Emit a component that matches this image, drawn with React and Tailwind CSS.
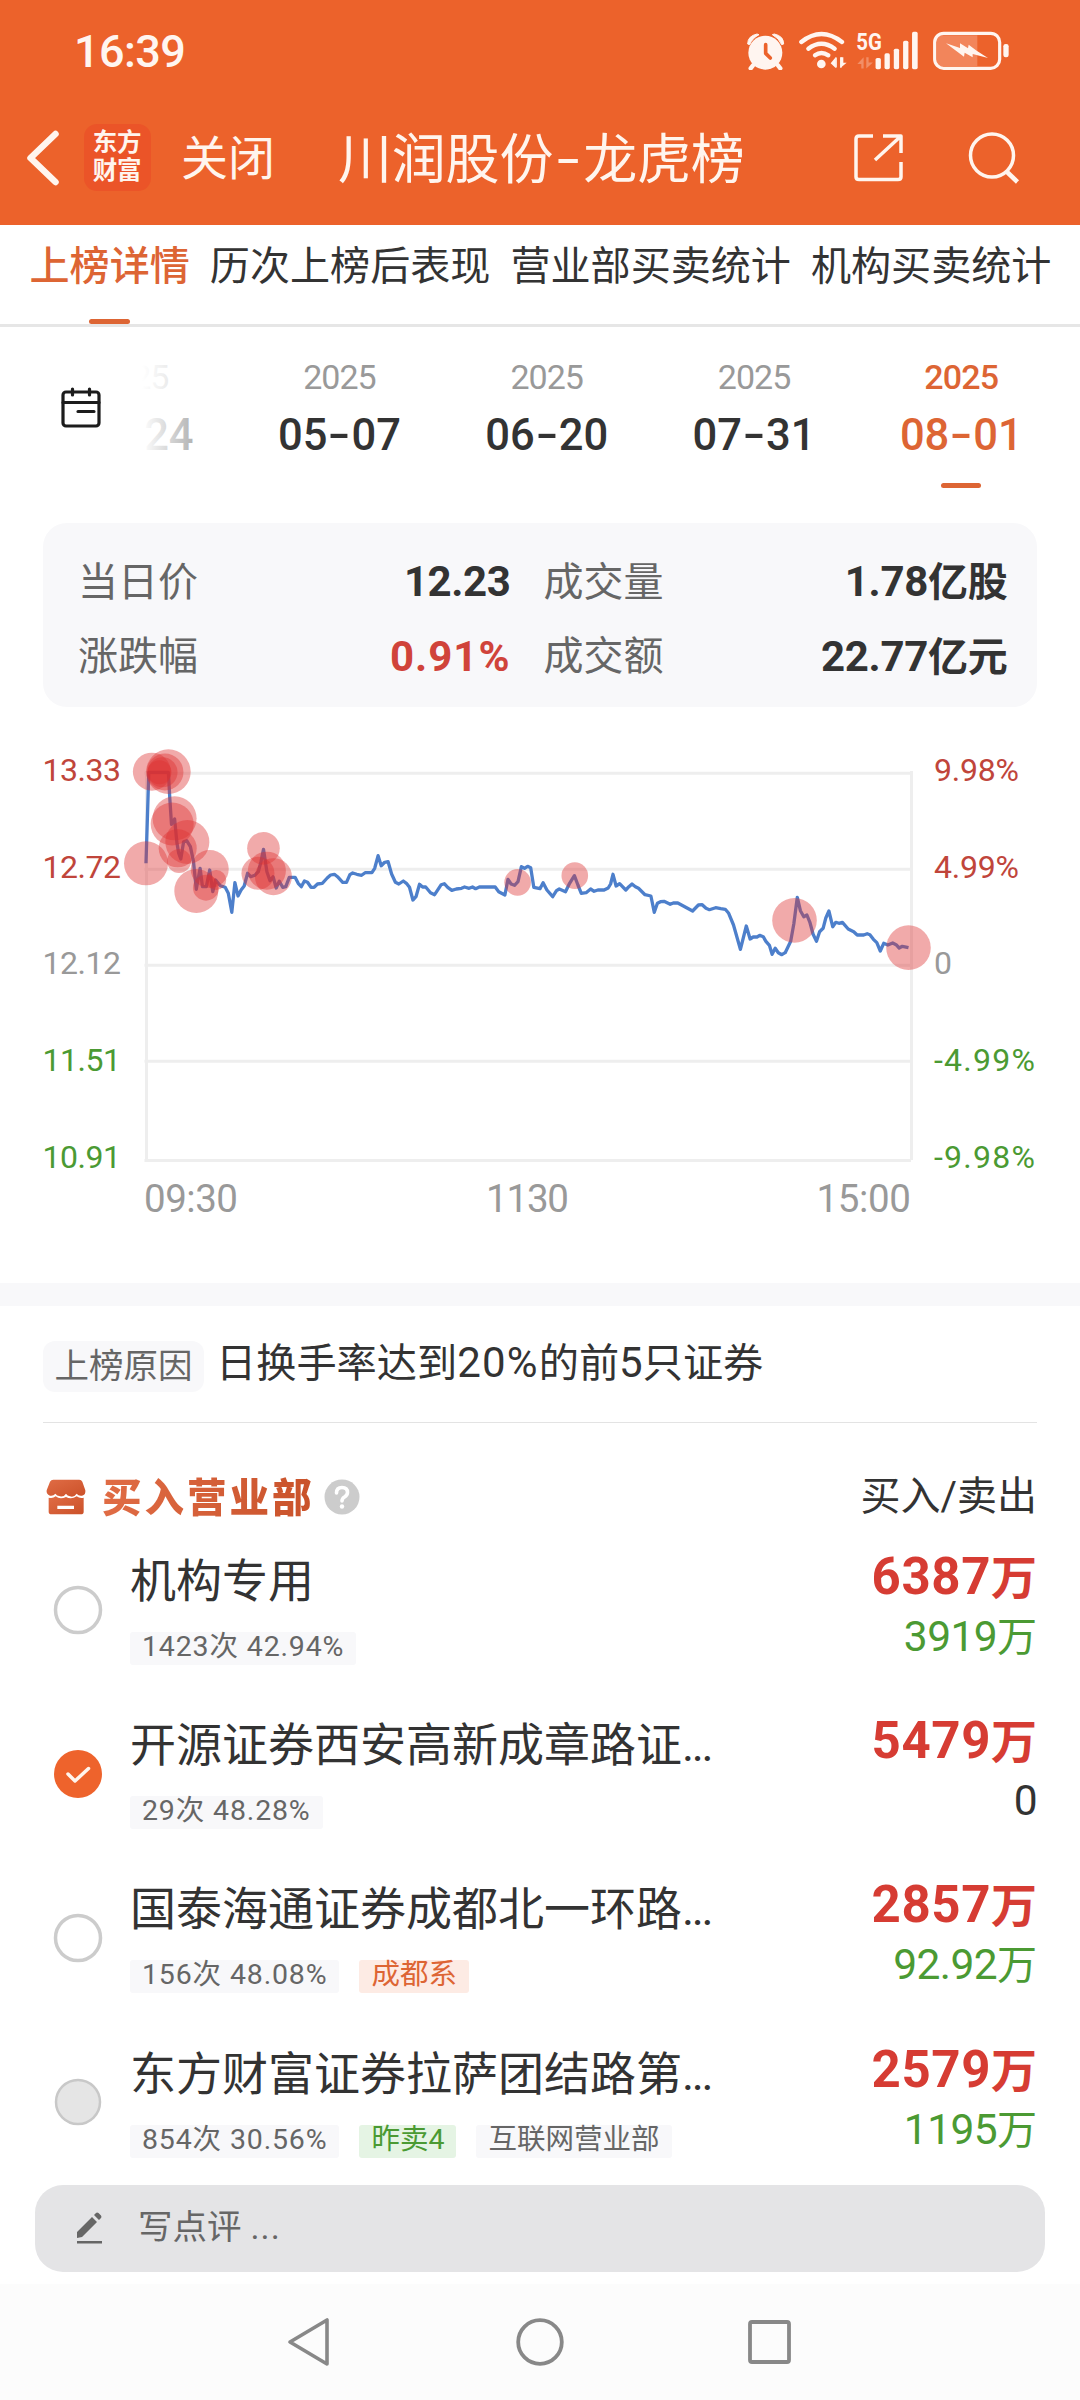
import React from "react";

/* Intraday price line, in plot units (x, y). */
const LEFT = "424,430 432,157 489,157 493,235 498,313 507,297 514,370 519,400 525,417 533,365 542,362 553,380 562,425 570,508 581,445 588,500 599,500 609,450 618,515 626,480 640,497 654,502 663,520 673,577 682,488 691,528 700,510 709,498 719,460 728,470 740,466 750,455 758,425 765,388 775,455 784,482 793,470 802,504 811,484 821,502 830,500 840,472 857,472 866,490 875,500 884,483 893,487 903,502 912,502 922,492 936,490 950,474 960,465 971,463 980,470 995,487 1006,487 1016,464 1024,459 1036,463 1050,466 1060,458 1080,458 1088,445 1098,407 1107,437 1117,427 1127,425 1137,462 1148,487 1158,492 1171,483 1180,490 1189,502 1199,540 1208,530 1218,493 1227,501 1236,501 1250,518 1262,524 1272,508 1281,494 1290,491 1300,502 1312,511 1325,507 1340,505 1349,501 1362,505 1372,501 1381,506 1392,501 1438,501 1448,515 1466,525 1475,478 1484,492 1494,496 1504,485 1514,440 1523,445 1532,439 1541,443 1550,502 1568,506";
const RIGHT = "9,488 20,510 37,530 48,512 56,507 74,515 86,490 100,467 110,495 120,520 134,518 147,507 157,514 168,510 186,510 198,504 205,492 212,463 221,498 231,491 249,510 258,500 267,492 277,500 286,505 305,524 322,528 332,577 341,550 350,545 360,544 378,553 387,549 400,549 443,573 460,555 471,554 482,565 492,569 510,563 525,566 538,568 548,580 562,615 582,688 599,618 610,657 619,651 630,651 638,646 648,650 656,664 666,676 674,703 683,685 692,698 702,704 712,698 728,664 737,612 747,532 756,572 766,590 775,585 784,608 793,643 803,664 812,635 822,625 830,594 839,573 850,620 859,607 868,610 878,607 895,627 911,635 921,645 940,645 950,641 958,644 968,658 978,668 988,693 998,670 1010,675 1024,669 1034,674 1043,684 1052,679 1070,683";

const px = (x) => x / 2.9037;
const py = (y) => y / 3 + 13;
const parse = (s, off) =>
  s.split(" ").map((p) => {
    const [x, y] = p.split(",").map(Number);
    return `${(px(x) + off).toFixed(1)},${py(y).toFixed(1)}`;
  });
const LINE = [...parse(LEFT, 0), ...parse(RIGHT, 540)].join(" ");

const BUBBLES = [
  [424, 430, 22], [441, 155, 19], [463, 157, 12], [472, 157, 15], [479, 156, 18.5], [489, 155, 22.3],
  [507, 295, 22], [500, 312, 21.5], [544, 366, 22], [516, 385, 19], [520, 423, 12], [570, 513, 22],
  [609, 447, 19], [598, 503, 13], [628, 480, 10], [765, 385, 16.3], [749, 460, 16.5], [775, 452, 19],
  [794, 470, 18.5], [1503, 487, 13.3], [1669, 467, 13.3], [2307, 601, 22.3], [2638, 683, 22.3],
];

const GRID = [66.3, 162.3, 258.3, 354.3, 453.6];
const LEFT_LABELS = [["13.33", "#c0453b"], ["12.72", "#c0453b"], ["12.12", "#999999"], ["11.51", "#4b9a33"], ["10.91", "#4b9a33"]];
const RIGHT_LABELS = [["9.98%", "#c0453b", 85], ["4.99%", "#c0453b", 85], ["0", "#999999", 17], ["-4.99%", "#4b9a33", 101], ["-9.98%", "#4b9a33", 101]];
const LABEL_Y = [74, 171, 267, 364, 461];

function StatusBar() {
  const c = "#fff5f0";
  return (
    <div className="flex h-[100px] items-start justify-between pl-[74px] pr-[70px]">
      <span className="pt-[25px] text-[45px] font-medium leading-[54px] tracking-[-0.6px] text-[#fff5f0]">16:39</span>
      <div className="flex pt-[30px]">
        <svg className="mr-[13px] h-[40px] w-[39px]" viewBox="33 30 117 120" fill={c}>
          <circle cx="91" cy="98" r="51" />
          <path d="M38 72Q38 48 66 42L72 44Q52 54 44 74ZM146 72Q146 48 118 42L112 44Q132 54 140 74Z" stroke={c} strokeWidth="3" strokeLinejoin="round" />
          <path d="M54 136L47 145M129 136L136 145" stroke={c} strokeWidth="13" strokeLinecap="round" />
          <path d="M92 74V100L106 114" stroke="#ec622b" strokeWidth="11" strokeLinecap="round" strokeLinejoin="round" fill="none" />
        </svg>
        <svg className="mr-[8px] h-[40px] w-[50px]" viewBox="190 30 150 120" fill="none" stroke={c} strokeWidth="13" strokeLinecap="round">
          <path d="M200 66Q260 18 322 66" />
          <path d="M221 86Q260 56 300 86" />
          <path d="M241 106Q260 92 281 106" />
          <circle cx="260" cy="132" r="13" fill={c} stroke="none" />
          <path d="M303 112V144L288 130ZM306 112V144M317 112V144L336 128L326 128V112Z" fill={c} stroke="none" />
          <path d="M304 114V141M319 114V141" strokeWidth="5" />
        </svg>
        <svg className="mr-[13px] h-[40px] w-[63px] overflow-visible" viewBox="364 30 190 120" fill={c}>
          <text x="365" y="91" fontSize="74" fontWeight="700" fontFamily="Roboto" textLength="77" lengthAdjust="spacingAndGlyphs">5G</text>
          <path d="M387 112V146H380V132H368ZM395 112H402V128H415L395 146Z" opacity="0.3" />
          <rect x="423" y="114" width="16" height="34" rx="5" />
          <rect x="450" y="100" width="16" height="48" rx="5" />
          <rect x="478" y="86" width="16" height="62" rx="5" />
          <rect x="506" y="62" width="16" height="86" rx="5" />
          <rect x="533" y="35" width="17" height="113" rx="5" />
        </svg>
        <svg className="h-[40px] w-[78px]" viewBox="592 30 234 120">
          <rect x="606" y="46" width="122" height="92" fill="#f2855b" />
          <rect x="600" y="40" width="195" height="105" rx="27" fill="none" stroke={c} strokeWidth="9.5" />
          <rect x="806" y="72" width="16" height="40" rx="7" fill={c} />
          <path d="M634 70L676 84L676 70L700 85L702 74L726 92L760 114L714 102L714 112L690 98L688 110Z" fill={c} />
        </svg>
      </div>
    </div>
  );
}

function NavBar() {
  return (
    <div className="flex h-[125px] items-start text-[#fff5ee]">
      <svg className="ml-[22.5px] mt-[30px] h-[56px] w-[38px]" viewBox="0 0 38 56" fill="none" stroke="#fff5ee" strokeWidth="6.5" strokeLinecap="round" strokeLinejoin="round">
        <path d="M32.500 4L7.500 28L32.500 52" />
      </svg>
      <div className="ml-[23px] mt-[24px] flex h-[67px] w-[67px] flex-col items-center justify-center rounded-[13px] bg-[#eb5428] pb-[2px] text-[24.5px] font-bold leading-[28px] tracking-[-0.3px]">
        <span>东方</span>
        <span>财富</span>
      </div>
      <span className="ml-[30.5px] mt-[29px] w-[95px] whitespace-nowrap text-[47px] leading-[60px]">关闭</span>
      <div className="ml-[62px] mt-[29px] flex w-[408px] whitespace-nowrap text-[54px] leading-[64px] tracking-[-0.2px]">
        <span>川润股份</span>
        <span className="w-[30px] origin-center -translate-y-[2px] scale-x-[1.5] text-center">-</span>
        <span>龙虎榜</span>
      </div>
      <svg className="ml-[107px] mt-[33px] h-[50px] w-[50px]" viewBox="0 0 50 50" fill="none" stroke="#fff5ee" strokeWidth="3.5" strokeLinejoin="round">
        <path d="M20 3H6Q3 3 3 6V44Q3 46.500 6 46.500H45Q48 46.500 48 44V29M30 3H48V20M48 3L22 27" />
      </svg>
      <svg className="ml-[65px] mt-[30px] h-[54px] w-[54px]" viewBox="0 0 54 54" fill="none" stroke="#fff5ee" strokeWidth="3.5">
        <circle cx="24" cy="25.500" r="21.500" />
        <path d="M38 41L49.500 52" strokeWidth="4.500" />
      </svg>
    </div>
  );
}

const TABS = ["上榜详情", "历次上榜后表现", "营业部买卖统计", "机构买卖统计"];

function Tabs() {
  return (
    <div className="flex h-[102px] gap-[20px] whitespace-nowrap border-b-[3px] border-[#e6e6e6] bg-white pl-[29.500px] text-[40.1px] leading-[48px] text-[#333]">
      {TABS.map((t, i) => (
        <div key={t} className={i === 0 ? "flex flex-col items-center justify-between pt-[18px] font-medium text-[#dd6534]" : "pt-[18px]"}>
          <span>{t}</span>
          {i === 0 && <i className="block h-[5px] w-[41px] rounded-full bg-[#dd6534]" />}
        </div>
      ))}
    </div>
  );
}

const DATES = [["04", "24"], ["05", "07"], ["06", "20"], ["07", "31"], ["08", "01"]];

function DateStrip() {
  return (
    <div className="flex h-[196px]">
      <svg className="ml-[60px] mt-[59px] h-[44px] w-[42px] shrink-0" viewBox="0 0 42 44" fill="none" stroke="#1c1c1c" strokeWidth="3.2" strokeLinecap="round">
        <rect x="3" y="6" width="36" height="34" rx="3" />
        <path d="M3 16.500H39M12.500 3V9M29.500 3V9M18 25.500H34" />
      </svg>
      <div className="relative ml-[28px] flex flex-1 overflow-hidden">
        <div className="-ml-[101.5px] flex shrink-0">
          {DATES.map(([m, d], i) => (
            <div key={m} className={i === 4 ? "flex w-[207.3px] flex-col items-center font-medium text-[#dd6534]" : "flex w-[207.3px] flex-col items-center text-[#333]"}>
              <span className={i === 4 ? "mt-[30px] text-[34px] leading-[40px] tracking-[-0.8px]" : "mt-[30px] text-[34px] leading-[40px] tracking-[-1px] text-[#999]"}>2025</span>
              <span className="mt-[13px] flex text-[43.500px] font-medium leading-[52px]">
                <span>{m}</span>
                <span className="w-[24px] -translate-y-[1px] scale-x-[1.5] text-center">-</span>
                <span>{d}</span>
              </span>
              {i === 4 && <i className="mt-[20.5px] block h-[5px] w-[40px] rounded-full bg-[#dd6534]" />}
            </div>
          ))}
        </div>
        <div className="absolute inset-y-0 left-0 w-[150px] bg-gradient-to-r from-white from-[8%] to-white/0" />
      </div>
    </div>
  );
}

function Stat({ label, num, unit, className }) {
  return (
    <div className="flex items-center justify-between whitespace-nowrap text-[40px] leading-[73.500px] text-[#666]">
      <span>{label}</span>
      <span className={className}>
        <span className="text-[42px]">{num}</span>{unit}
      </span>
    </div>
  );
}

function Summary() {
  return (
    <div className="mx-[43px] grid h-[184px] grid-cols-[432.5px_464px] content-start gap-x-[33px] rounded-[24px] bg-[#f8f8fa] pl-[35px] pt-[22px]">
      <Stat label="当日价" num="12.23" className="font-bold tracking-[-0.4px] text-[#333]" />
      <Stat label="成交量" num="1.78" unit="亿股" className="font-bold tracking-[-0.3px] text-[#333]" />
      <Stat label="涨跌幅" num="0.91%" className="font-bold tracking-[1px] text-[#d0433a]" />
      <Stat label="成交额" num="22.77" unit="亿元" className="font-bold tracking-[-0.3px] text-[#333]" />
    </div>
  );
}

function Chart() {
  return (
    <svg className="block h-[576px] w-[1080px]" viewBox="0 0 1080 576" fontFamily="Roboto" fontSize="32" style={{ fontKerning: "none" }}>
      <g stroke="#eeeeee" strokeWidth="3">
        {GRID.map((y) => <path key={y} d={`M144.500 ${y}H911`} />)}
        <path d="M146.500 64V453M911.500 64V453" />
      </g>
      <polyline points={LINE} fill="none" stroke="#4d7fcb" strokeWidth="3.3" strokeLinejoin="round" />
      <g fill="#dc3030" fillOpacity="0.41">
        {BUBBLES.map(([x, y, r], i) => <circle key={i} cx={px(x)} cy={py(y)} r={r} />)}
      </g>
      {LEFT_LABELS.map(([t, c], i) => <text key={t} x="42.500" y={LABEL_Y[i] - 0.5} fill={c} textLength="78.500">{t}</text>)}
      {RIGHT_LABELS.map(([t, c, w], i) => <text key={t} x="934" y={LABEL_Y[i] - 0.5} fill={c} textLength={w}>{t}</text>)}
      <g fill="#999999" fontSize="38.500">
        <text x="144" y="505" textLength="94">09:30</text>
        <text x="486" y="505" textLength="83">1130</text>
        <text x="816.500" y="505" textLength="94.500">15:00</text>
      </g>
    </svg>
  );
}

function Reason() {
  return (
    <div className="mx-[43px] flex h-[117px] items-start border-b border-[#e3e3e3] pt-[35px]">
      <span className="flex h-[51px] w-[161px] items-center justify-center rounded-[12px] bg-[#f8f8fa] pb-[1px] text-[34.500px] leading-[48px] text-[#666]">上榜原因</span>
      <span className="-mt-[3px] ml-[12px] whitespace-nowrap text-[40.2px] leading-[50px] text-[#333]">
        日换手率达到<span className="text-[42px] tracking-[1.200px]">20%</span>的前<span className="text-[42px]">5</span>只证券
      </span>
    </div>
  );
}

function SectionHead() {
  return (
    <div className="flex h-[116px] items-start justify-between pl-[46px] pr-[43px] pt-[46px]">
      <div className="flex h-[56px] items-center">
        <svg className="h-[36px] w-[40px]" viewBox="0 0 120 108">
          <defs>
            <linearGradient id="shop" x1="0" y1="0" x2="1" y2="1">
              <stop offset="0" stopColor="#e06c45" />
              <stop offset="1" stopColor="#cb5129" />
            </linearGradient>
          </defs>
          <path d="M22 2H100Q106 2 109 8L118 34Q120 48 108 50Q98 52 92 44Q84 56 72 52Q64 50 60 44Q54 54 42 52Q32 50 28 44Q22 52 12 50Q0 46 2 34L12 8Q15 2 22 2Z" fill="url(#shop)" />
          <path d="M8 56Q20 60 29 52Q42 62 60 54Q76 62 92 52Q102 60 113 56V98Q113 106 104 106H17Q8 106 8 98ZM34 80V90H84V80Z" fill="url(#shop)" fillRule="evenodd" />
        </svg>
        <span className="ml-[16px] w-[213px] -translate-y-[2px] whitespace-nowrap bg-gradient-to-r from-[#e06c45] to-[#c9522a] bg-clip-text font-['Noto_Sans_CJK_SC'] text-[39.5px] font-black leading-[56px] tracking-[3px] text-transparent">买入营业部</span>
        <svg className="ml-[9px] h-[36px] w-[36px]" viewBox="0 0 36 36" fill="none" stroke="#fff" strokeWidth="3.600" strokeLinecap="round">
          <circle cx="18" cy="18" r="17.500" fill="#ccc" stroke="none" />
          <path d="M12.500 14Q12.500 8.500 18 8.500Q23.500 8.500 23.500 13.500Q23.500 16 20.500 18Q18 19.500 18 22" />
          <circle cx="18" cy="27.500" r="2.200" fill="#fff" stroke="none" />
        </svg>
      </div>
      <span className="mt-[2px] whitespace-nowrap text-[40px] leading-[52px] text-[#333]">买入/卖出</span>
    </div>
  );
}

const ROWS = [
  { state: "off", name: "机构专用", tag: ["1423", "42.94%"], buy: "6387", sell: "3919" },
  { state: "on", name: "开源证券西安高新成章路证", dots: true, tag: ["29", "48.28%"], buy: "5479", sell: null },
  { state: "off", name: "国泰海通证券成都北一环路", dots: true, tag: ["156", "48.08%"], extra: [["成都系", "orange"]], buy: "2857", sell: "92.92" },
  { state: "disabled", name: "东方财富证券拉萨团结路第", dots: true, tag: ["854", "30.56%"], extra: [["昨卖4", "green"], ["互联网营业部", "gray"]], buy: "2579", sell: "1195" },
];

const TAG_STYLE = {
  gray: "h-[33px] rounded-[3px] bg-[#f8f8fa] px-[12px] leading-[30px] text-[#666]",
  orange: "h-[33px] rounded-[3px] bg-[#fdebe4] px-[12px] leading-[30px] text-[#dd6534]",
  green: "h-[33px] rounded-[3px] bg-[#e5f4e4] px-[12px] leading-[30px] text-[#4b9a33]",
};

function Radio({ state }) {
  return (
    <svg className="ml-[53px] mt-[45.5px] h-[50px] w-[50px] shrink-0" viewBox="0 0 50 50" fill="none">
      {state === "off" && <circle cx="25" cy="25" r="22.500" stroke="#ccc" strokeWidth="3.500" />}
      {state === "disabled" && <circle cx="25" cy="25" r="22" fill="#e5e5e5" stroke="#c8c8c8" strokeWidth="2.500" />}
      {state === "on" && (
        <>
          <circle cx="25" cy="25" r="24" fill="#ee632c" />
          <path d="M15 25L22 32L35.500 19.500" stroke="#fff5ee" strokeWidth="3.500" strokeLinecap="round" strokeLinejoin="round" />
        </>
      )}
    </svg>
  );
}

function Row({ row }) {
  return (
    <div className="flex h-[164.2px] items-start pr-[43px]">
      <Radio state={row.state} />
      <div className="ml-[27px] flex-1">
        <div className="mt-[13px] h-[58px] whitespace-nowrap text-[46px] leading-[58px] text-[#333]">
          {row.name}{row.dots && <span className="tracking-[-2.400px]">...</span>}
        </div>
        <div className="mt-[22px] flex gap-[20px] whitespace-nowrap text-[28.500px]">
          <span className={TAG_STYLE.gray}><span className="tracking-[0.850px]">{row.tag[0]}次 {row.tag[1]}</span></span>
          {row.extra && row.extra.map(([t, k]) => <span key={t} className={TAG_STYLE[k]}>{t}</span>)}
        </div>
      </div>
      <div className="flex flex-col items-end whitespace-nowrap">
        <span className="mt-[8px] h-[60px] text-[46px] font-bold leading-[60px] text-[#d63c33]"><span className="text-[51px] tracking-[0.6px]">{row.buy}</span>万</span>
        <span className={row.sell ? "h-[60px] text-[40px] leading-[60px] text-[#4b9a33]" : "h-[60px] text-[40px] leading-[60px] text-[#333]"}>
          <span className="text-[42.500px] tracking-[-0.6px]">{row.sell || "0"}</span>{row.sell && "万"}
        </span>
      </div>
    </div>
  );
}

function CommentBar() {
  return (
    <div className="mx-[35px] mt-[-11px] flex h-[87px] items-center rounded-[28px] bg-[#e4e4e6] text-[#666]">
      <svg className="ml-[41px] h-[32px] w-[28px]" viewBox="0 0 28 32" fill="#666">
        <path d="M1 26V20L16 5L21 10L6 25ZM18 3L20 1Q21 0 22.500 1L25 3.500Q26 5 25 6L23 8Z" />
        <rect x="1" y="29" width="25" height="2.500" />
      </svg>
      <span className="ml-[34px] pb-[3px] text-[34.500px] leading-[44px]">写点评<span className="ml-[9px] tracking-[1px]">...</span></span>
    </div>
  );
}

function SystemNav() {
  return (
    <div className="mt-[12px] flex h-[117px] items-center bg-[#fcfcfc] pl-[286px]">
      <svg className="h-[52px] w-[46px]" viewBox="0 0 46 52" fill="none" stroke="#888" strokeWidth="3.600" strokeLinejoin="round">
        <path d="M41 4V48L4 26Z" />
      </svg>
      <svg className="ml-[182px] h-[52px] w-[52px]" viewBox="0 0 52 52" fill="none" stroke="#888" strokeWidth="3.800">
        <circle cx="26" cy="26" r="21.800" />
      </svg>
      <svg className="ml-[177.5px] h-[52px] w-[52px]" viewBox="0 0 52 52" fill="none" stroke="#888" strokeWidth="3.800">
        <rect x="6" y="6" width="39" height="40" rx="2" />
      </svg>
    </div>
  );
}

export default function App() {
  return (
    <div className="h-[2400px] w-[1080px] overflow-hidden bg-white font-[Roboto,'Noto_Sans_CJK_SC',sans-serif]">
      <header className="bg-[#ec622b]">
        <StatusBar />
        <NavBar />
      </header>
      <Tabs />
      <DateStrip />
      <Summary />
      <Chart />
      <div className="h-[23px] bg-[#f8f8fa]" />
      <Reason />
      <SectionHead />
      {ROWS.map((r) => <Row key={r.name} row={r} />)}
      <CommentBar />
      <SystemNav />
    </div>
  );
}
